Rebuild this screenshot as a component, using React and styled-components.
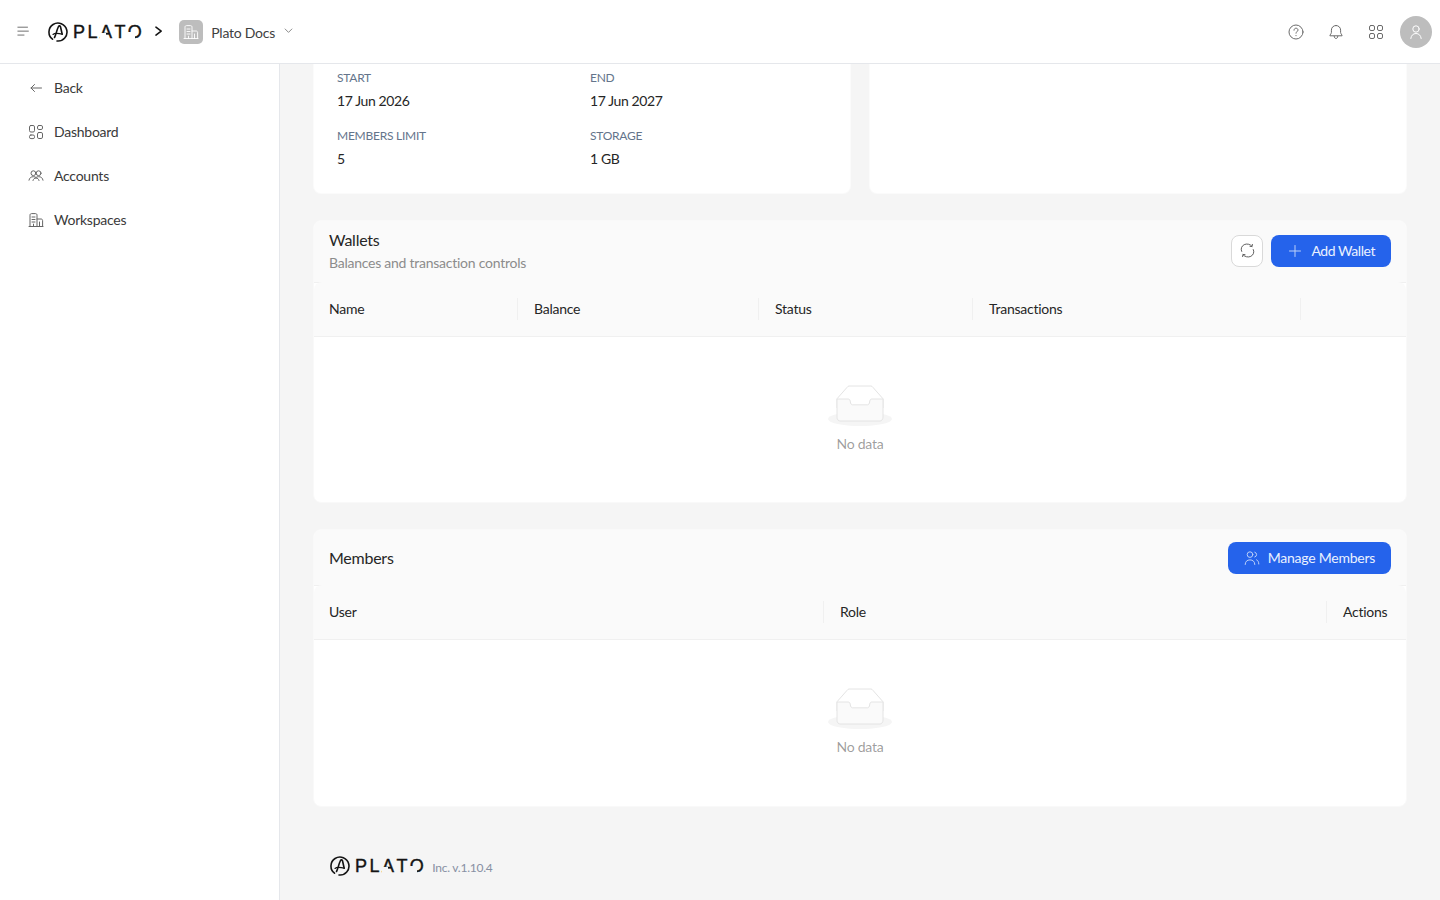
import React from 'react';
import styled, { createGlobalStyle } from 'styled-components';

const GlobalStyle = createGlobalStyle`
  html, body { margin: 0; padding: 0; height: 100%; }
  body {
    font-family: Lato, "Liberation Sans", sans-serif;
    font-size: 14px;
    letter-spacing: -0.25px;
    color: rgba(0, 0, 0, 0.88);
    background: #f5f5f5;
    overflow: hidden;
  }
`;

function Icon({ size = 16, width = 1, children }) {
  return (
    <svg width={size} height={size} viewBox="0 0 16 16" fill="none" stroke="currentColor" strokeWidth={width} strokeLinecap="round" strokeLinejoin="round">
      {children}
    </svg>
  );
}

const BuildingPaths = () => (
  <>
    <path d="M1 14.5h14" />
    <path d="M2 14.5V3.2c0-1 .6-1.6 1.5-1.6h4c1 0 1.5.6 1.5 1.6v11.3" />
    <path d="M9 7h4c1 0 1.6.6 1.6 1.6v5.9" />
    <path d="M4 5h3M4 7.5h3M4 10h3M5.5 14.5v-2.4M11.5 10v4.5" />
  </>
);

const MenuIcon = () => (
  <Icon size={14} width={1.1}>
    <path d="M1 2.500h11M1 7h12M1 11.500h7" />
  </Icon>
);

const DashboardIcon = () => (
  <Icon>
    <rect x="1.5" y="1.5" width="5" height="6.5" rx="1.4" />
    <rect x="9.5" y="1.5" width="5" height="4" rx="1.4" />
    <rect x="1.5" y="11" width="5" height="3.6" rx="1.4" />
    <rect x="9.5" y="8.5" width="5" height="6" rx="1.4" />
  </Icon>
);

const AccountsIcon = () => (
  <Icon>
    <circle cx="5.4" cy="5.2" r="2.4" />
    <circle cx="10.6" cy="5.2" r="2.4" />
    <path d="M1 12.2c.4-2.4 2-3.5 4.4-3.5 1.2 0 2 .3 2.6.8.6-.5 1.4-.8 2.6-.8 2.4 0 4 1.1 4.4 3.5" />
    <path d="M5 12.5c.4-1.6 1.4-2.4 3-2.4s2.6.8 3 2.4" />
  </Icon>
);

const UsersIcon = () => (
  <Icon>
    <circle cx="6" cy="4.6" r="2.8" />
    <path d="M1.2 14.5c0-3 2-4.6 4.8-4.6s4.8 1.6 4.8 4.6" />
    <path d="M10.8 2.2a2.500 2.500 0 0 1 0 4.800M12.600 9.800c1.400.6 2.200 2.200 2.200 4.200" />
  </Icon>
);

const RefreshIcon = () => (
  <Icon size={15}>
    <path d="M1.800 9A6.300 5.600 0 0 1 12.800 3.600" />
    <path d="M14.200 7A6.300 5.600 0 0 1 3.200 12.400" />
    <path d="M13.200 1.500l-.3 2.200-2.200-.1M2.800 14.500l.3-2.200 2.200.1" />
  </Icon>
);

const LogoMark = () => (
  <svg width="20" height="20" viewBox="0 0 20 20" fill="none" stroke="#141414" strokeWidth="1.6" strokeLinecap="round" strokeLinejoin="round">
    <path d="M4.500 17.200A9 9 0 1 1 9 19" />
    <path d="M6.500 15.500C8 13 8.700 8 10.500 4.500c.7-1 1.700-.7 2 .3l1.700 7.500" />
    <path d="M5 12.500c1.500-1.500 3.500-1.700 9.200-.4" strokeWidth="1.100" />
  </svg>
);

const EmptyArt = () => (
  <svg width="64" height="41" viewBox="0 0 64 41">
    <g transform="translate(0 1)" fill="none" fillRule="evenodd">
      <ellipse fill="#f5f5f5" cx="32" cy="33" rx="32" ry="7" />
      <g fillRule="nonzero" stroke="#e4e4e4">
        <path d="M55 12.760L44.854 1.258C44.367.474 43.656 0 42.907 0H21.093c-.749 0-1.460.474-1.947 1.257L9 12.761V22h46v-9.240z" />
        <path d="M41.613 15.931c0-1.605.994-2.930 2.227-2.931H55v18.137C55 33.260 53.680 35 52.050 35h-40.100C10.320 35 9 33.259 9 31.137V13h11.160c1.233 0 2.227 1.323 2.227 2.928v.022c0 1.605 1.005 2.901 2.237 2.901h14.752c1.232 0 2.237-1.308 2.237-2.913v-.007z" fill="#fafafa" />
      </g>
    </g>
  </svg>
);

const Shell = styled.div`
  display: flex;
  flex-direction: column;
  height: 100vh;
`;

const TopBar = styled.header`
  display: flex;
  align-items: center;
  flex: none;
  height: 64px;
  box-sizing: border-box;
  padding: 1px 8px 0 17px;
  background: #fff;
  border-bottom: 1px solid #e5e7eb;
`;

const MenuButton = styled.span`
  display: flex;
  color: #6b6b6b;
  margin-right: 17px;
`;

const LogoWrap = styled.span`
  display: inline-flex;
  align-items: center;
  gap: 5px;
`;

const Wordmark = styled.span`
  font-family: "Liberation Sans", sans-serif;
  font-size: 18px;
  line-height: 1;
  letter-spacing: 2.5px;
  color: #141414;
  -webkit-text-stroke: 0.4px #141414;
`;

/* the mark's A and O are cut open: a patch in the page colour lies over the letter */
const CutLetter = styled.span`
  position: relative;

  &::after {
    content: '';
    position: absolute;
    left: ${(p) => p.$left};
    bottom: ${(p) => p.$bottom};
    width: ${(p) => p.$width};
    height: ${(p) => p.$height};
    background: ${(p) => p.$patch};
  }
`;

const Crumb = styled.span`
  display: flex;
  color: #141414;
  margin: 0 13px 0 8px;
`;

const WorkspaceBadge = styled.span`
  display: flex;
  align-items: center;
  justify-content: center;
  width: 24px;
  height: 24px;
  border-radius: 5px;
  background: #bdbdbd;
  color: #fff;
  margin-right: 8px;
`;

const WorkspaceName = styled.span`
  color: #3f3f3f;
  margin-right: 9px;
`;

const Caret = styled.span`
  display: flex;
  color: #666;
`;

const Spacer = styled.div`
  flex: 1;
`;

const IconButton = styled.span`
  display: flex;
  align-items: center;
  justify-content: center;
  width: 40px;
  height: 40px;
  color: #6b6b6b;
`;

const Avatar = styled.span`
  display: flex;
  align-items: center;
  justify-content: center;
  width: 32px;
  height: 32px;
  margin-left: 4px;
  border-radius: 50%;
  background: #bdbdbd;
  color: #fff;
`;

const Body = styled.div`
  display: flex;
  flex: 1;
  min-height: 0;
`;

const Sidebar = styled.nav`
  flex: none;
  width: 280px;
  box-sizing: border-box;
  padding-top: 2px;
  background: #fff;
  border-right: 1px solid #e5e7eb;
`;

const NavItem = styled.a`
  display: flex;
  align-items: center;
  gap: 10px;
  height: 44px;
  padding-left: 28px;
  color: #3a3a3a;
`;

const NavGlyph = styled.span`
  display: flex;
  color: #666;
`;

const NavLabel = styled.span`
  margin-bottom: 2px;
`;

const Main = styled.main`
  flex: 1;
  min-width: 0;
  box-sizing: border-box;
  padding: 0 33px;
  display: flex;
  flex-direction: column;
  gap: 26px;
`;

const TopRow = styled.div`
  display: grid;
  grid-template-columns: 1fr 1fr;
  gap: 18px;
`;

const SummaryCard = styled.section`
  height: 130px;
  box-sizing: border-box;
  padding: 5px 23px 0;
  background: #fff;
  border: 1px solid #fbfbfb;
  border-top: 0;
  border-radius: 0 0 8px 8px;
`;

const FieldGrid = styled.dl`
  display: grid;
  grid-template-columns: 237px 237px;
  gap: 15px 16px;
  margin: 0;
`;

const FieldLabel = styled.dt`
  font-size: 12px;
  line-height: 18px;
  text-transform: uppercase;
  color: #64748b;
  margin-bottom: 3px;
`;

const FieldValue = styled.dd`
  font-size: 14px;
  line-height: 22px;
  letter-spacing: -0.4px;
  margin: 0;
  color: #262626;
`;

const Card = styled.section`
  background: #fff;
  border: 1px solid #f9f9f9;
  border-radius: 8px;
  overflow: hidden;
`;

const CardHead = styled.div`
  display: flex;
  align-items: center;
  justify-content: space-between;
  height: ${(p) => p.$height}px;
  box-sizing: border-box;
  padding: 0 15px;
  background: #fafafa;
  border-bottom: 1px solid #f0f0f0;
`;

const CardTitle = styled.h2`
  margin: 0;
  font-size: 16px;
  font-weight: 400;
  line-height: 22px;
  color: #262626;
`;

const CardSub = styled.p`
  margin: 1px 0 0;
  font-size: 14px;
  line-height: 22px;
  color: #8c8c8c;
`;

const Actions = styled.div`
  display: flex;
  gap: 8px;
  margin-bottom: ${(p) => p.$lift || 0}px;
`;

const GhostButton = styled.button`
  display: flex;
  align-items: center;
  justify-content: center;
  width: 32px;
  height: 32px;
  padding: 0;
  background: #fff;
  border: 1px solid #d9d9d9;
  border-radius: 8px;
  color: #555;
`;

const PrimaryButton = styled.button`
  display: flex;
  align-items: center;
  gap: 8px;
  height: 32px;
  padding: 0 16px;
  background: #2563eb;
  border: 0;
  border-radius: 8px;
  color: #eaf1ff;
  font: inherit;
  letter-spacing: ${(p) => p.$tracking}px;
`;

const ButtonGlyph = styled.span`
  display: flex;
  color: #bcd0f8;
`;

const HeadRow = styled.div`
  display: grid;
  grid-template-columns: ${(p) => p.$columns};
  height: 54px;
  margin-top: -1px;
  background: #fafafa;
  border-bottom: 1px solid #f0f0f0;
  border-radius: 8px 8px 0 0;
`;

const HeadCell = styled.div`
  position: relative;
  display: flex;
  align-items: center;
  justify-content: ${(p) => (p.$end ? 'flex-end' : 'flex-start')};
  box-sizing: border-box;
  padding: 0 ${(p) => (p.$end ? 19 : 16)}px 2px ${(p) => (p.$first ? 15 : 16)}px;
  color: #262626;

  &:not(:last-child)::after {
    content: '';
    position: absolute;
    top: 16px;
    right: 0;
    width: 1px;
    height: 22px;
    background: #f0f0f0;
  }
`;

const EmptyState = styled.div`
  display: flex;
  flex-direction: column;
  align-items: center;
  height: ${(p) => p.$height}px;
  box-sizing: border-box;
  padding-top: 48px;
  color: rgba(0, 0, 0, 0.4);
`;

const EmptyText = styled.span`
  margin-top: 7px;
  line-height: 22px;
`;

const Footer = styled.footer`
  display: flex;
  align-items: center;
  gap: 6px;
  padding: 23px 0 0 17px;
`;

const FooterNote = styled.span`
  font-size: 12px;
  color: #8790a3;
  margin-top: 3px;
`;

const Logo = ({ patch }) => (
  <LogoWrap>
    <LogoMark />
    <Wordmark>
      PL
      <CutLetter $patch={patch} $left="0" $bottom="0" $width="42%" $height="45%">A</CutLetter>
      T
      <CutLetter $patch={patch} $left="0" $bottom="2px" $width="45%" $height="8px">O</CutLetter>
    </Wordmark>
  </LogoWrap>
);

const navItems = [
  { label: 'Back', icon: <Icon><path d="M13.500 8H3M6.500 4.500 3 8l3.500 3.500" /></Icon> },
  { label: 'Dashboard', icon: <DashboardIcon /> },
  { label: 'Accounts', icon: <AccountsIcon /> },
  { label: 'Workspaces', icon: <Icon><BuildingPaths /></Icon> },
];

const walletColumns = ['Name', 'Balance', 'Status', 'Transactions', ''];
const memberColumns = ['User', 'Role', 'Actions'];

function DataTable({ columns, template, bodyHeight }) {
  return (
    <>
      <HeadRow $columns={template}>
        {columns.map((name, i) => (
          <HeadCell key={i} $first={i === 0} $end={name === 'Actions'}>{name}</HeadCell>
        ))}
      </HeadRow>
      <EmptyState $height={bodyHeight}>
        <EmptyArt />
        <EmptyText>No data</EmptyText>
      </EmptyState>
    </>
  );
}

export default function App() {
  return (
    <>
      <GlobalStyle />
      <Shell>
        <TopBar>
          <MenuButton><MenuIcon /></MenuButton>
          <Logo patch="#fff" />
          <Crumb><Icon size={14} width={1.8}><path d="M4.500 2.500 10.500 7l-6 4.500" /></Icon></Crumb>
          <WorkspaceBadge><Icon size={16} width={0.9}><BuildingPaths /></Icon></WorkspaceBadge>
          <WorkspaceName>Plato Docs</WorkspaceName>
          <Caret><Icon size={12}><path d="M1.500 4 6 8.500 10.500 4" /></Icon></Caret>
          <Spacer />
          <IconButton>
            <Icon>
              <circle cx="8" cy="8" r="7" />
              <path d="M6 6.200c0-1.200.9-2 2-2s2 .8 2 1.800c0 1.500-2 1.600-2 3.200M8 11.500v.2" />
            </Icon>
          </IconButton>
          <IconButton>
            <Icon>
              <path d="M8 1.500c-2.700 0-4.600 2-4.600 4.700v2.300c0 1-1.500 2.300-1.500 3.300h12.200c0-1-1.500-2.300-1.500-3.300V6.200C12.600 3.500 10.700 1.500 8 1.500z" />
              <path d="M6.200 12.300c0 1.200.8 2.200 1.800 2.200s1.800-1 1.800-2.200" />
            </Icon>
          </IconButton>
          <IconButton>
            <Icon>
              <rect x="1.500" y="1.500" width="5" height="5" rx="1.500" />
              <rect x="9.500" y="1.500" width="5" height="5" rx="1.500" />
              <rect x="1.500" y="9.500" width="5" height="5" rx="1.500" />
              <rect x="9.500" y="9.500" width="5" height="5" rx="1.500" />
            </Icon>
          </IconButton>
          <Avatar>
            <Icon>
              <circle cx="8" cy="5" r="3.200" />
              <path d="M2.800 14.500c.3-3 2.300-5 5.200-5s4.900 2 5.200 5" />
            </Icon>
          </Avatar>
        </TopBar>
        <Body>
          <Sidebar>
            {navItems.map((item) => (
              <NavItem key={item.label}>
                <NavGlyph>{item.icon}</NavGlyph>
                <NavLabel>{item.label}</NavLabel>
              </NavItem>
            ))}
          </Sidebar>
          <Main>
            <TopRow>
              <SummaryCard>
                <FieldGrid>
                  <div><FieldLabel>Start</FieldLabel><FieldValue>17 Jun 2026</FieldValue></div>
                  <div><FieldLabel>End</FieldLabel><FieldValue>17 Jun 2027</FieldValue></div>
                  <div><FieldLabel>Members limit</FieldLabel><FieldValue>5</FieldValue></div>
                  <div><FieldLabel>Storage</FieldLabel><FieldValue>1 GB</FieldValue></div>
                </FieldGrid>
              </SummaryCard>
              <SummaryCard />
            </TopRow>
            <Card>
              <CardHead $height={62}>
                <div>
                  <CardTitle>Wallets</CardTitle>
                  <CardSub>Balances and transaction controls</CardSub>
                </div>
                <Actions $lift={2}>
                  <GhostButton><RefreshIcon /></GhostButton>
                  <PrimaryButton $tracking={-0.45}>
                    <ButtonGlyph><Icon><path d="M8 2.500v11M2.500 8h11" /></Icon></ButtonGlyph>
                    Add Wallet
                  </PrimaryButton>
                </Actions>
              </CardHead>
              <DataTable columns={walletColumns} template="204px 241px 214px 328px 1fr" bodyHeight={165} />
            </Card>
            <Card>
              <CardHead $height={56}>
                <CardTitle>Members</CardTitle>
                <Actions>
                  <PrimaryButton $tracking={-0.25}>
                    <ButtonGlyph><UsersIcon /></ButtonGlyph>
                    Manage Members
                  </PrimaryButton>
                </Actions>
              </CardHead>
              <DataTable columns={memberColumns} template="510px 503px 1fr" bodyHeight={166} />
            </Card>
            <Footer>
              <Logo patch="#f5f5f5" />
              <FooterNote>Inc. v.1.10.4</FooterNote>
            </Footer>
          </Main>
        </Body>
      </Shell>
    </>
  );
}
